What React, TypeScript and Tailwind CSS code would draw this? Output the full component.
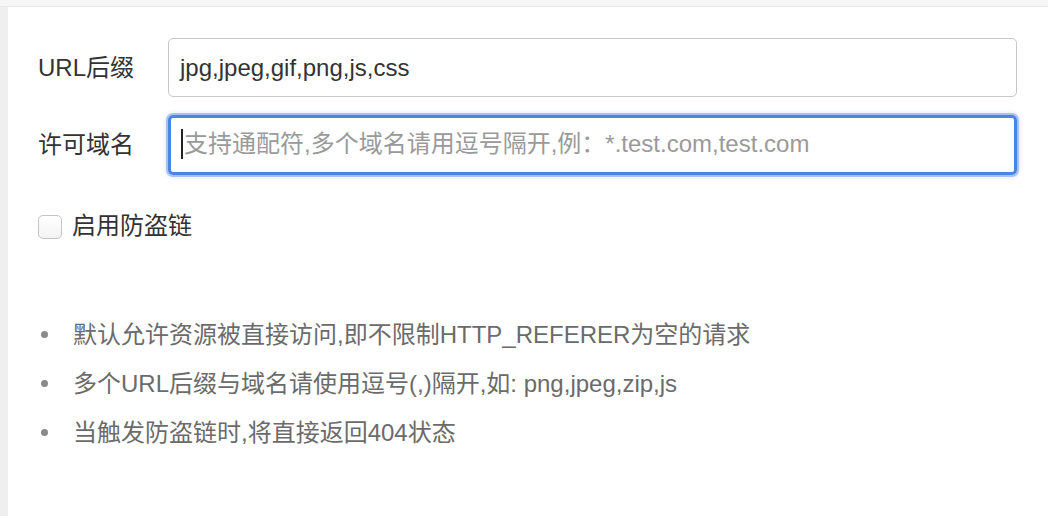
import React from "react";

const font = "font-['Liberation_Sans','Noto_Sans_CJK_SC',sans-serif]";

export default function App() {
  const items = [
    "默认允许资源被直接访问,即不限制HTTP_REFERER为空的请求",
    "多个URL后缀与域名请使用逗号(,)隔开,如: png,jpeg,zip,js",
    "当触发防盗链时,将直接返回404状态",
  ];
  return (
    <div className={`w-[1048px] h-[516px] flex flex-col bg-[#f0f0f0] overflow-hidden ${font}`}>
      <div className="h-[7px] shrink-0 bg-[#f6f6f6] border-b border-[#e9e9e9]" />
      <div className="flex flex-1">
        <div className="w-[8px] shrink-0 bg-[#efefef]" />
        <div className="flex-1 bg-white pl-[30px] pr-[31px] pt-[31px]">
          {/* Row 1 */}
          <div className="flex items-center h-[59px]">
            <div className="w-[130px] text-[24px] text-[#333] leading-none">URL后缀</div>
            <div className="flex-1 h-[59px] border-[1.5px] border-[#c8c8c8] rounded-[5px] pl-[11px] flex items-center text-[24px] text-[#333] leading-none">
              jpg,jpeg,gif,png,js,css
            </div>
          </div>
          {/* Row 2 */}
          <div className="flex items-center h-[60px] mt-[18px]">
            <div className="w-[130px] text-[24px] text-[#333] leading-none">许可域名</div>
            <div className="flex-1 h-[60px] border-[3px] border-[#4a84e6] rounded-[5px] pl-[10px] pb-[3px] flex items-center text-[24px] leading-none shadow-[0_0_0_2px_rgba(90,145,235,0.45),0_0_4px_2px_rgba(90,145,235,0.25)]">
              <span className="w-[2px] h-[30px] bg-[#222] mr-[1px] shrink-0" />
              <span className="text-[#9a9a9a] whitespace-nowrap">支持通配符,多个域名请用逗号隔开,例：*.test.com,test.com</span>
            </div>
          </div>
          {/* Checkbox */}
          <div className="flex items-center h-[24px] mt-[40px]">
            <div className="w-[24px] h-[24px] rounded-[5px] border border-[#c4c4c4] bg-gradient-to-b from-white to-[#f3f3f3] shrink-0" />
            <span className="ml-[10px] text-[24px] text-[#333] leading-none pb-[3px]">启用防盗链</span>
          </div>
          {/* List */}
          <ul className="mt-[71px]">
            {items.map((t) => (
              <li key={t} className="flex items-center h-[49px]">
                <span className="w-[7px] h-[7px] rounded-full bg-[#8a8a8a] ml-[3px] shrink-0" />
                <span className="ml-[25px] text-[24px] text-[#6b6b6b] leading-none whitespace-nowrap">{t}</span>
              </li>
            ))}
          </ul>
        </div>
      </div>
    </div>
  );
}
